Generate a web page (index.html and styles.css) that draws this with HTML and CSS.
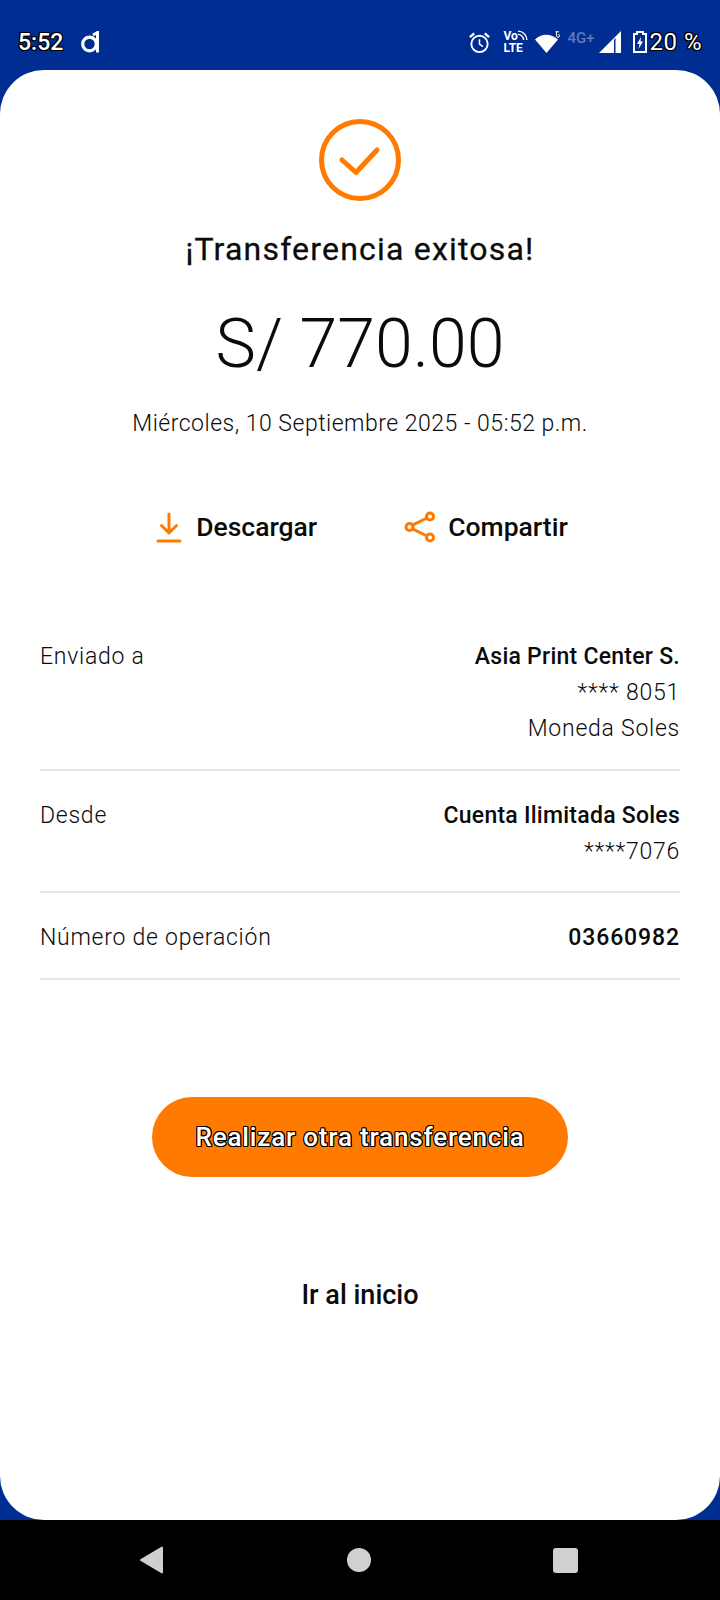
FILE: index.html
```html
<!DOCTYPE html>
<html lang="es">
<head>
<meta charset="utf-8">
<title>Transferencia exitosa</title>
<link rel="stylesheet" href="styles.css">
</head>
<body>
<div class="app">
  <header class="status">
    <div class="status-left">
      <span class="outlined time">5:52</span>
      <svg class="app-d" width="19" height="22" viewBox="0 0 19 22"><circle cx="8.500" cy="13" r="6.800" fill="none" stroke="#fff" stroke-width="3.200"/><path d="M16.500 21.500V1.500L12 4" fill="none" stroke="#fff" stroke-width="3"/></svg>
    </div>
    <div class="status-right">
      <svg class="alarm" width="23" height="23" viewBox="0 0 24 24" fill="none" stroke="#fff" stroke-width="2"><circle cx="12" cy="13.500" r="8.500"/><path d="M12 8.500v5.200l3.600 2.600" stroke-width="1.600"/><path d="M2 6.500 6.500 2.500M22 6.500 17.500 2.500" stroke-width="2.400"/></svg>
      <span class="volte"><span class="vo">Vo<svg width="10" height="10" viewBox="0 0 9 9" fill="none" stroke="#fff" stroke-width="1.200"><path d="M0 1a8 8 0 0 1 8 8M0 4a5 5 0 0 1 5 5"/></svg></span><span>LTE</span></span>
      <svg class="wifi" width="26" height="23" viewBox="0 0 26 23"><path d="M0 8.500C6 2 16 2 23 8.500L11.500 22Z" fill="#fff"/><path d="M20.500 .8h3.500M21.500 .8v4a1.500 1.500 0 1 0 1.500-1.500" fill="none" stroke="#fff" stroke-width="1"/></svg>
      <span class="net">4G+</span>
      <svg class="signal" width="22" height="22" viewBox="0 0 22 22"><path d="M0 22 22 0v22Z" fill="#fff"/><path d="M15 8.500 16.500 7v15H15Z" fill="#002d91"/></svg>
      <svg class="battery" width="14" height="22" viewBox="0 0 14 22"><path d="M4 1h6v2h3v18H1V3h3Z" fill="#002d91" stroke="#fff" stroke-width="2"/><path d="M8 6 4 13h2.500L5.500 18 10 10.500H7.500Z" fill="#fff"/></svg>
      <span class="outlined pct">20 %</span>
    </div>
  </header>

  <main class="card">
    <svg class="check" width="82" height="82" viewBox="0 0 82 82" fill="none" stroke="#ff7a00"><circle cx="41" cy="41" r="38.500" stroke-width="5"/><path d="M23 41 L37 53.500 L58 31" stroke-width="5" stroke-linecap="round" stroke-linejoin="round"/></svg>
    <h1 class="title">¡Transferencia exitosa!</h1>
    <p class="amount">S/ 770.00</p>
    <p class="date">Miércoles, 10 Septiembre 2025 - 05:52 p.m.</p>

    <div class="actions">
      <div class="action">
        <svg width="26" height="32" viewBox="0 0 26 32" fill="none" stroke="#ff7a00" stroke-width="3" stroke-linecap="round" stroke-linejoin="round"><path d="M13 3v19M5.500 14.500 13 22l7.500-7.500M2 30h22"/></svg>
        <span>Descargar</span>
      </div>
      <div class="action action-share">
        <svg width="32" height="32" viewBox="0 0 32 32" fill="none" stroke="#ff7a00" stroke-width="3"><circle cx="5.500" cy="16" r="3.500"/><circle cx="26" cy="5.500" r="3.500"/><circle cx="26" cy="26.500" r="3.500"/><path d="M8.500 14.200 23 7M8.500 17.800 23 25"/></svg>
        <span>Compartir</span>
      </div>
    </div>

    <section class="details">
      <div class="row">
        <span class="label">Enviado a</span>
        <div class="values"><strong>Asia Print Center S.</strong><span>**** 8051</span><span>Moneda Soles</span></div>
      </div>
      <div class="row row-from">
        <span class="label">Desde</span>
        <div class="values"><strong>Cuenta Ilimitada Soles</strong><span>****7076</span></div>
      </div>
      <div class="row">
        <span class="label">Número de operación</span>
        <div class="values"><strong class="number">03660982</strong></div>
      </div>
    </section>

    <button class="primary" type="button">Realizar otra transferencia</button>
    <a class="home">Ir al inicio</a>
  </main>

  <nav class="navbar">
    <svg width="26" height="28" viewBox="0 0 26 28"><path d="M2 14 23 1.500V26.500Z" fill="#d0d0d0" stroke="#d0d0d0" stroke-width="2" stroke-linejoin="round"/></svg>
    <span class="nav-home"></span>
    <span class="nav-recent"></span>
  </nav>
</div>
</body>
</html>
```

FILE: styles.css
```css
* { box-sizing: border-box; }
html, body { margin: 0; padding: 0; }
body { font-family: Roboto, "Liberation Sans", sans-serif; background: #002d91; color: #0b0b0b; }
.app { width: 720px; height: 1600px; display: flex; flex-direction: column; overflow: hidden; }

.status { height: 70px; flex: none; display: flex; justify-content: space-between; align-items: center; padding: 14px 18px 0 18px; color: #fff; }
.status-left { display: flex; align-items: center; gap: 18px; }
.status-right { display: flex; align-items: center; }
.outlined { color: #fff; text-shadow: -1px -1px 0 #000, 1px -1px 0 #000, -1px 1px 0 #000, 1px 1px 0 #000, 0 -1px 0 #000, 0 1px 0 #000, -1px 0 0 #000, 1px 0 0 #000; }
.time { font-size: 23px; font-weight: 500; }
.pct { font-size: 24px; font-weight: 400; margin-left: 2px; letter-spacing: .5px; }
.volte { width: 24px; margin-left: 12px; display: flex; flex-direction: column; font-size: 12px; font-weight: 700; line-height: 12px; align-items: flex-start; }
.vo { display: flex; align-items: flex-start; }
.wifi { margin-left: 8px; }
.net { width: 30px; margin-left: 6px; font-size: 15px; font-weight: 500; color: #5f79bd; margin-top: -9px; }
.signal { margin-left: 2px; }
.battery { margin-left: 12px; }

.card { flex: 1; background: #fff; border-radius: 44px; display: flex; flex-direction: column; align-items: center; padding-top: 49px; }
.check { display: block; }
.title { margin: 28px 0 0; font-size: 32px; line-height: 40px; font-weight: 400; letter-spacing: 1.2px; -webkit-text-stroke: .3px #0b0b0b; }
.amount { margin: 34px 0 0; font-size: 68px; line-height: 82px; font-weight: 300; }
.date { margin: 24px 0 0; font-size: 23px; line-height: 30px; font-weight: 300; letter-spacing: .5px; }

.actions { display: flex; align-items: center; gap: 87px; margin: 72px 0 0 4px; }
.action { display: flex; align-items: center; gap: 14px; font-size: 26.500px; font-weight: 500; line-height: 32px; }
.action-share { gap: 12px; }

.details { width: 640px; margin-top: 69px; }
.row { display: flex; justify-content: space-between; padding: 27px 0 22px; border-bottom: 2px solid #e6e6e6; font-size: 23px; line-height: 36px; font-weight: 300; letter-spacing: .75px; }
.row-from { padding-bottom: 21px; }
.values { display: flex; flex-direction: column; align-items: flex-end; }
.values strong { font-weight: 500; letter-spacing: .25px; }
.values .number { letter-spacing: .9px; }

.primary { margin-top: 117px; width: 416px; height: 80px; border: 0; border-radius: 40px; background: #ff7a00; font-family: inherit; font-size: 26px; font-weight: 500; letter-spacing: .83px; color: #fff; text-shadow: -1px -1px 0 #000, 1px -1px 0 #000, -1px 1px 0 #000, 1px 1px 0 #000, 0 -1px 0 #000, 0 1px 0 #000, -1px 0 0 #000, 1px 0 0 #000; }
.home { margin-top: 98px; font-size: 27px; line-height: 40px; font-weight: 500; }

.navbar { height: 80px; flex: none; background: #000; display: flex; align-items: center; justify-content: space-between; padding: 0 142px 0 139px; }
.nav-home { width: 24px; height: 24px; border-radius: 50%; background: #d0d0d0; }
.nav-recent { width: 25px; height: 25px; border-radius: 3px; background: #d0d0d0; }
```
